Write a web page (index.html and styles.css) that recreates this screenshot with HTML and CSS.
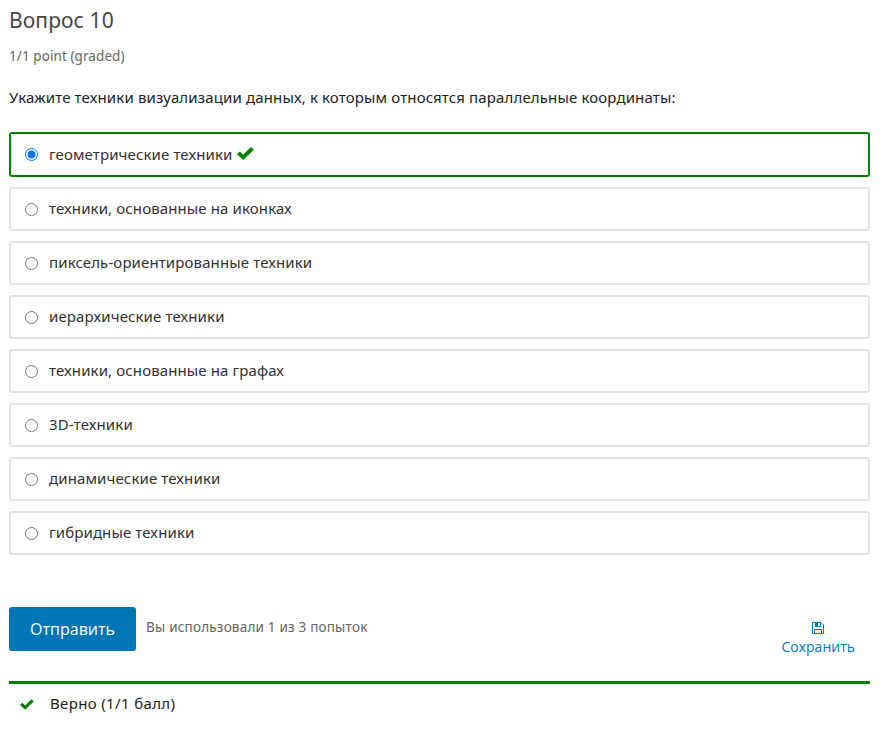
FILE: index.html
```html
<!DOCTYPE html>
<html lang="ru">
<head>
<meta charset="utf-8">
<title>Вопрос 10</title>
<link rel="stylesheet" href="styles.css">
</head>
<body>
<main class="problem">
  <h3 class="title"><span>Вопрос 10</span></h3>
  <div class="progress">1/1 point (graded)</div>
  <p class="question">Укажите техники визуализации данных, к которым относятся параллельные координаты:</p>
  <div class="choices">
    <label class="choice correct"><input type="radio" name="answer" checked><span>геометрические техники</span><svg class="check" viewBox="0 0 17 13"><path d="M0 7.2 2.8 4.4 6.2 7.6 13.9 0 16.8 2.7 6.3 13Z"/></svg></label>
    <label class="choice"><input type="radio" name="answer"><span>техники, основанные на иконках</span></label>
    <label class="choice"><input type="radio" name="answer"><span>пиксель-ориентированные техники</span></label>
    <label class="choice"><input type="radio" name="answer"><span>иерархические техники</span></label>
    <label class="choice"><input type="radio" name="answer"><span>техники, основанные на графах</span></label>
    <label class="choice"><input type="radio" name="answer"><span>3D-техники</span></label>
    <label class="choice"><input type="radio" name="answer"><span>динамические техники</span></label>
    <label class="choice"><input type="radio" name="answer"><span>гибридные техники</span></label>
  </div>
  <div class="actions">
    <button class="submit" type="button">Отправить</button>
    <span class="attempts">Вы использовали 1 из 3 попыток</span>
    <button class="save" type="button">
      <svg class="disk" viewBox="0 0 12 12"><path d="M.5.5H9L11.5 3V11.5H.5ZM2.5 11.5V7.5H9.5V11.5M3.5.5V4.5H8.5V.5"/><path class="fill" d="M3 0H6V4H3Z"/></svg>
      <span>Сохранить</span>
    </button>
  </div>
  <div class="notice"><svg class="check" viewBox="0 0 17 13"><path d="M0 7.2 2.8 4.4 6.2 7.6 13.9 0 16.8 2.7 6.3 13Z"/></svg><span>Верно (1/1 балл)</span></div>
</main>
</body>
</html>
```
FILE: styles.css
```css
* { box-sizing: border-box; }
body {
  margin: 0;
  background: #fff;
  color: #222;
  font: 15px/24px "Noto Sans", "Open Sans", sans-serif;
}
.problem { padding: 6px 13px 0 9px; }
.title {
  margin: 0;
  font-size: 21px;
  font-weight: 400;
  line-height: 28px;
  letter-spacing: .1px;
  color: #474747;
}
.progress {
  margin-top: 12px;
  font-size: 13.5px;
  line-height: 20px;
  letter-spacing: .08px;
  color: #646464;
}
.question { margin: 19px 0 23px; letter-spacing: .14px; }
.choices { display: flex; flex-direction: column; gap: 10px; }
.choice {
  display: flex;
  align-items: center;
  height: 44px;
  padding: 0 14px 2px;
  border: 2px solid #e3e3e3;
  border-radius: 3px;
  letter-spacing: .12px;
  color: #313131;
}
.choice input { width: 13px; height: 13px; margin: 3px 11px 0 0; }
.correct { height: 45px; border-color: #008100; }
.correct input { margin-top: 1px; }
.check { width: 17px; height: 13px; fill: #008100; }
.correct .check { margin: 0 0 0 5px; }
.actions { display: flex; align-items: flex-start; margin-top: 52px; height: 74px; }
.submit {
  width: 127px;
  height: 44px;
  padding: 0;
  border: 0;
  border-radius: 3px;
  background: #0075b4;
  color: #fff;
  font: 16px/44px "Open Sans", sans-serif;
}
.attempts {
  margin: 10px 0 0 10px;
  font-size: 13.5px;
  line-height: 20px;
  letter-spacing: .2px;
  color: #646464;
}
.save {
  display: flex;
  flex-direction: column;
  align-items: center;
  margin: 15px 15px 0 auto;
  padding: 0;
  border: 0;
  background: none;
  color: #0075b4;
  font: 14px/20px "Open Sans", sans-serif;
}
.disk { width: 12px; height: 12px; margin-bottom: 3px; fill: none; stroke: #0075b4; }
.disk .fill { fill: #0075b4; stroke: none; }
.notice {
  display: flex;
  align-items: center;
  height: 43px;
  padding: 0 0 2px 11px;
  border-top: 3px solid #008100;
  letter-spacing: .35px;
}
.notice .check { width: 14px; height: 11px; margin: 3px 16px 0 0; }
```
